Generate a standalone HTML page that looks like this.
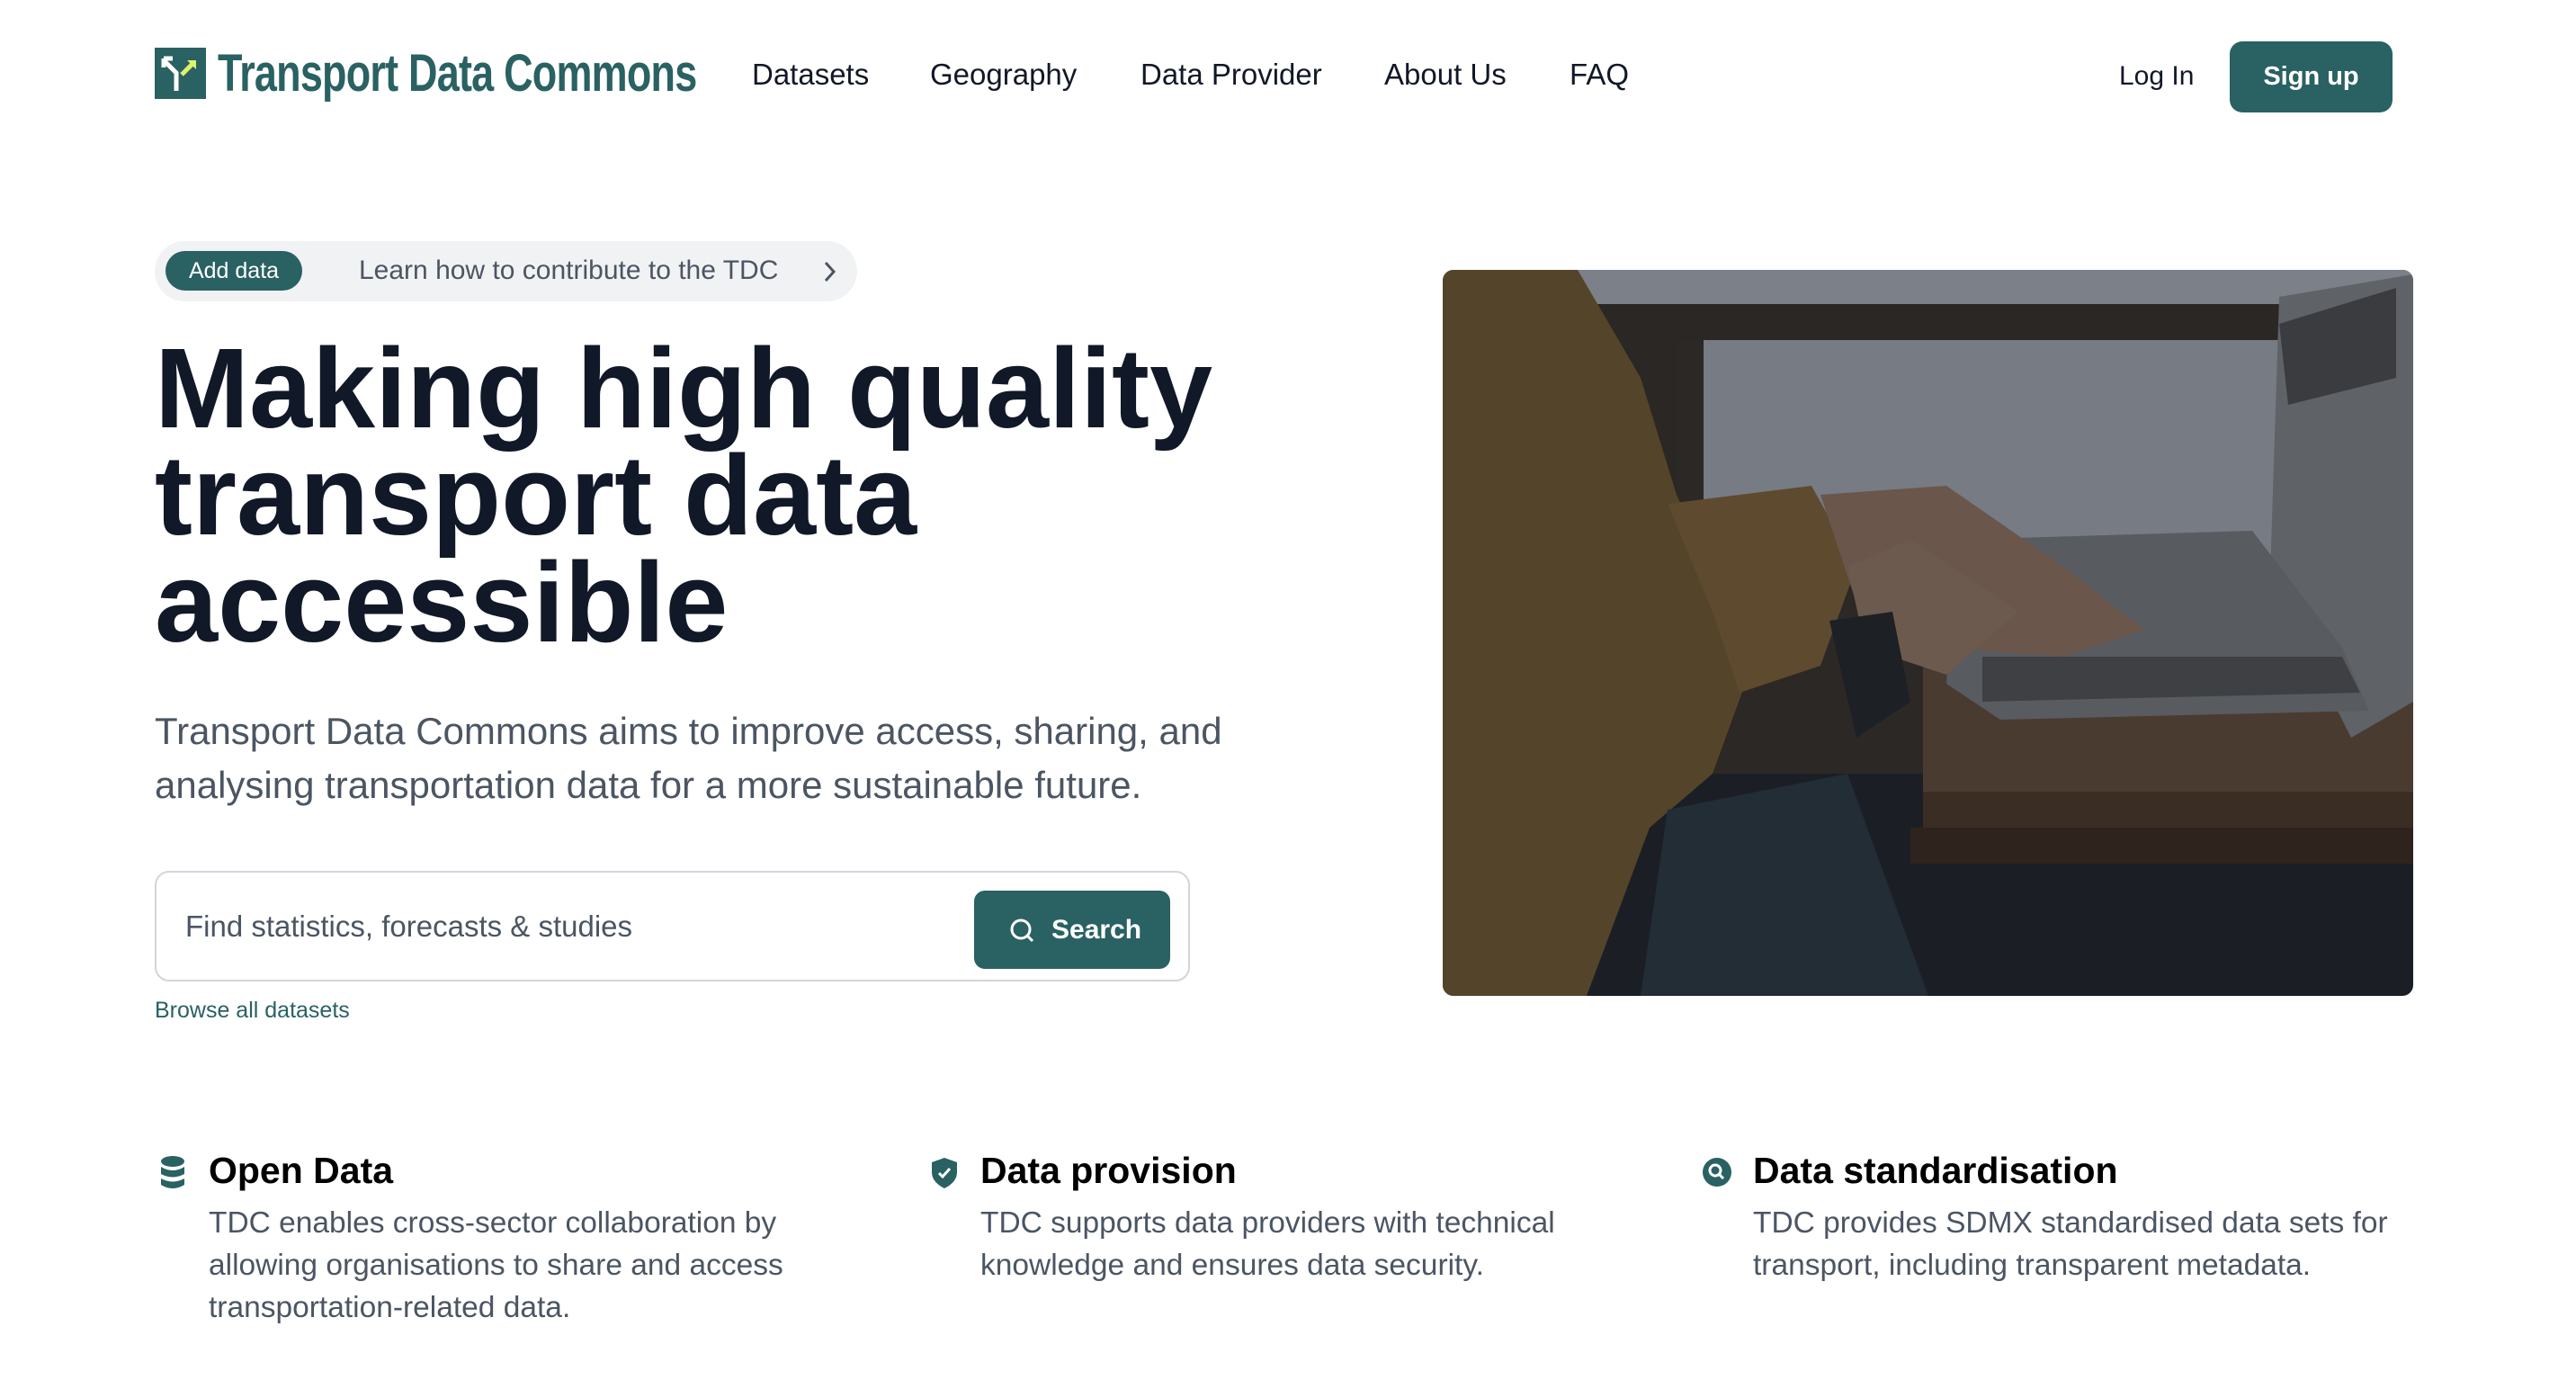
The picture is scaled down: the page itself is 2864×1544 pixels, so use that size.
<!DOCTYPE html>
<html><head><meta charset="utf-8"><style>
*{margin:0;padding:0;box-sizing:border-box}
body{width:2864px;height:1544px;background:#fff;font-family:"Liberation Sans",sans-serif;position:relative;overflow:hidden;color:#111827}
.abs{position:absolute}
.nav{font-size:33px;color:#111827;top:64px}
.h1{left:172px;top:372px;font-size:126px;font-weight:bold;line-height:119px;letter-spacing:0px;color:#111827;width:1450px}
.p{left:172px;top:783px;font-size:42px;line-height:60px;color:#4b5563;width:1400px}
.ft{font-size:41px;font-weight:bold;color:#000;top:1278px}
.fd{font-size:33.5px;line-height:47px;color:#4b5563;top:1336px}
</style></head><body>
<svg class="abs" style="left:172px;top:53px" width="57" height="57" viewBox="0 0 57 57"><rect width="57" height="57" fill="#2a6163"/><path d="M11 15 L24 28 L24 48" stroke="#fff" stroke-width="5" fill="none"/><path d="M10 12 H20 M10 12 V22" stroke="#fff" stroke-width="5"/><path d="M30 30 L44 16" stroke="#dff26a" stroke-width="5"/><path d="M36 14 H46 V24 Z" fill="#dff26a"/></svg>
<div class="abs" style="left:242px;top:48px;font-size:58px;font-weight:bold;color:#2a6163;letter-spacing:-1px;transform:scaleX(0.775);transform-origin:left;white-space:nowrap">Transport Data Commons</div>
<div class="abs nav" style="left:836px">Datasets</div>
<div class="abs nav" style="left:1034px">Geography</div>
<div class="abs nav" style="left:1268px">Data Provider</div>
<div class="abs nav" style="left:1539px">About Us</div>
<div class="abs nav" style="left:1745px">FAQ</div>
<div class="abs" style="left:2356px;top:68px;font-size:30px">Log In</div>
<div class="abs" style="left:2479px;top:46px;width:181px;height:79px;background:#2a6163;border-radius:14px;color:#fff;font-size:29px;font-weight:bold;text-align:center;line-height:79px">Sign up</div>
<div class="abs" style="left:172px;top:268px;width:781px;height:67px;background:#f1f2f4;border-radius:34px"></div>
<div class="abs" style="left:184px;top:279px;width:152px;height:44px;background:#2a6163;border-radius:22px;color:#fff;font-size:25px;text-align:center;line-height:44px">Add data</div>
<div class="abs" style="left:399px;top:284px;font-size:30px;color:#4b5563">Learn how to contribute to the TDC</div>
<svg class="abs" style="left:913px;top:288px" width="20" height="28" viewBox="0 0 20 28"><path d="M5 4 L14 14 L5 24" stroke="#4b5563" stroke-width="3" fill="none"/></svg>
<div class="abs h1">Making high quality<br>transport data<br>accessible</div>
<div class="abs p">Transport Data Commons aims to improve access, sharing, and<br>analysing transportation data for a more sustainable future.</div>
<div class="abs" style="left:172px;top:968px;width:1151px;height:123px;border:2px solid #d1d5db;border-radius:16px"></div>
<div class="abs" style="left:206px;top:1011px;font-size:33px;color:#4b5563">Find statistics, forecasts &amp; studies</div>
<div class="abs" style="left:1083px;top:990px;width:218px;height:87px;background:#2a6163;border-radius:12px;color:#fff;font-size:30px;font-weight:bold;line-height:87px;padding-left:86px">Search</div>
<svg class="abs" style="left:1122px;top:1020px" width="30" height="30" viewBox="0 0 30 30"><circle cx="13" cy="13" r="10" stroke="#fff" stroke-width="3" fill="none"/><path d="M20 20 L26 26" stroke="#fff" stroke-width="3"/></svg>
<div class="abs" style="left:172px;top:1109px;font-size:25px;color:#2a6163">Browse all datasets</div>
<!-- photo -->
<svg class="abs" style="left:1604px;top:300px;border-radius:12px" width="1079" height="807" viewBox="0 0 1079 807">
<rect width="1079" height="807" fill="#1b1f25"/>
<rect x="130" y="0" width="949" height="560" fill="#2b2826"/>
<rect x="150" y="0" width="929" height="38" fill="#7c8088"/>
<rect x="150" y="38" width="929" height="40" fill="#2a2724"/>
<rect x="290" y="78" width="789" height="260" fill="#767b84"/>
<rect x="200" y="78" width="60" height="260" fill="#2a2724"/>
<rect x="534" y="440" width="545" height="140" fill="#4a3b30"/>
<rect x="534" y="580" width="545" height="40" fill="#3a2d24"/>
<rect x="520" y="620" width="559" height="40" fill="#2e241d"/>
<polygon points="930,30 1079,5 1079,480 1010,520 920,340" fill="#5f6267"/>
<polygon points="930,60 1060,20 1060,120 940,150" fill="#3a3c40"/>
<polygon points="570,300 900,290 1000,420 1030,490 620,500 560,460" fill="#585b5f"/>
<polygon points="600,430 1000,430 1020,470 600,480" fill="#3e4043"/>
<polygon points="0,0 150,0 220,120 260,250 300,340 340,450 300,560 230,620 160,807 0,807" fill="#54452a"/>
<polygon points="250,260 410,240 460,330 420,440 330,470 300,380" fill="#5e4a2e"/>
<polygon points="420,250 560,240 690,330 780,400 690,430 560,420 460,370" fill="#6a564a"/>
<polygon points="450,330 520,300 640,380 560,450 470,420" fill="#6c5a4e"/>
<polygon points="430,390 500,380 520,480 460,520" fill="#1d2024"/>
<polygon points="250,600 450,560 540,807 220,807" fill="#222d36"/>
</svg>
<svg class="abs" style="left:176px;top:1284px" width="32" height="40" viewBox="0 0 32 40"><ellipse cx="16" cy="7" rx="13" ry="6" fill="#2a6163"/><path d="M3 13 Q16 21 29 13 V21 Q16 28 3 21Z" fill="#2a6163"/><path d="M3 26 Q16 33 29 26 V33 Q16 41 3 33Z" fill="#2a6163"/></svg>
<div class="abs ft" style="left:232px">Open Data</div>
<div class="abs fd" style="left:232px">TDC enables cross-sector collaboration by<br>allowing organisations to share and access<br>transportation-related data.</div>
<svg class="abs" style="left:1034px;top:1286px" width="32" height="36" viewBox="0 0 32 36"><path d="M16 1 L30 6 V17 Q30 28 16 35 Q2 28 2 17 V6 Z" fill="#2a6163"/><path d="M10 18 L14 22 L22 13" stroke="#fff" stroke-width="3" fill="none"/></svg>
<div class="abs ft" style="left:1090px">Data provision</div>
<div class="abs fd" style="left:1090px">TDC supports data providers with technical<br>knowledge and ensures data security.</div>
<svg class="abs" style="left:1892px;top:1286px" width="34" height="34" viewBox="0 0 34 34"><circle cx="17" cy="17" r="16" fill="#2a6163"/><circle cx="15" cy="15" r="6" stroke="#fff" stroke-width="3" fill="none"/><path d="M19 19 L24 24" stroke="#fff" stroke-width="3"/></svg>
<div class="abs ft" style="left:1949px">Data standardisation</div>
<div class="abs fd" style="left:1949px">TDC provides SDMX standardised data sets for<br>transport, including transparent metadata.</div>
</body></html>
